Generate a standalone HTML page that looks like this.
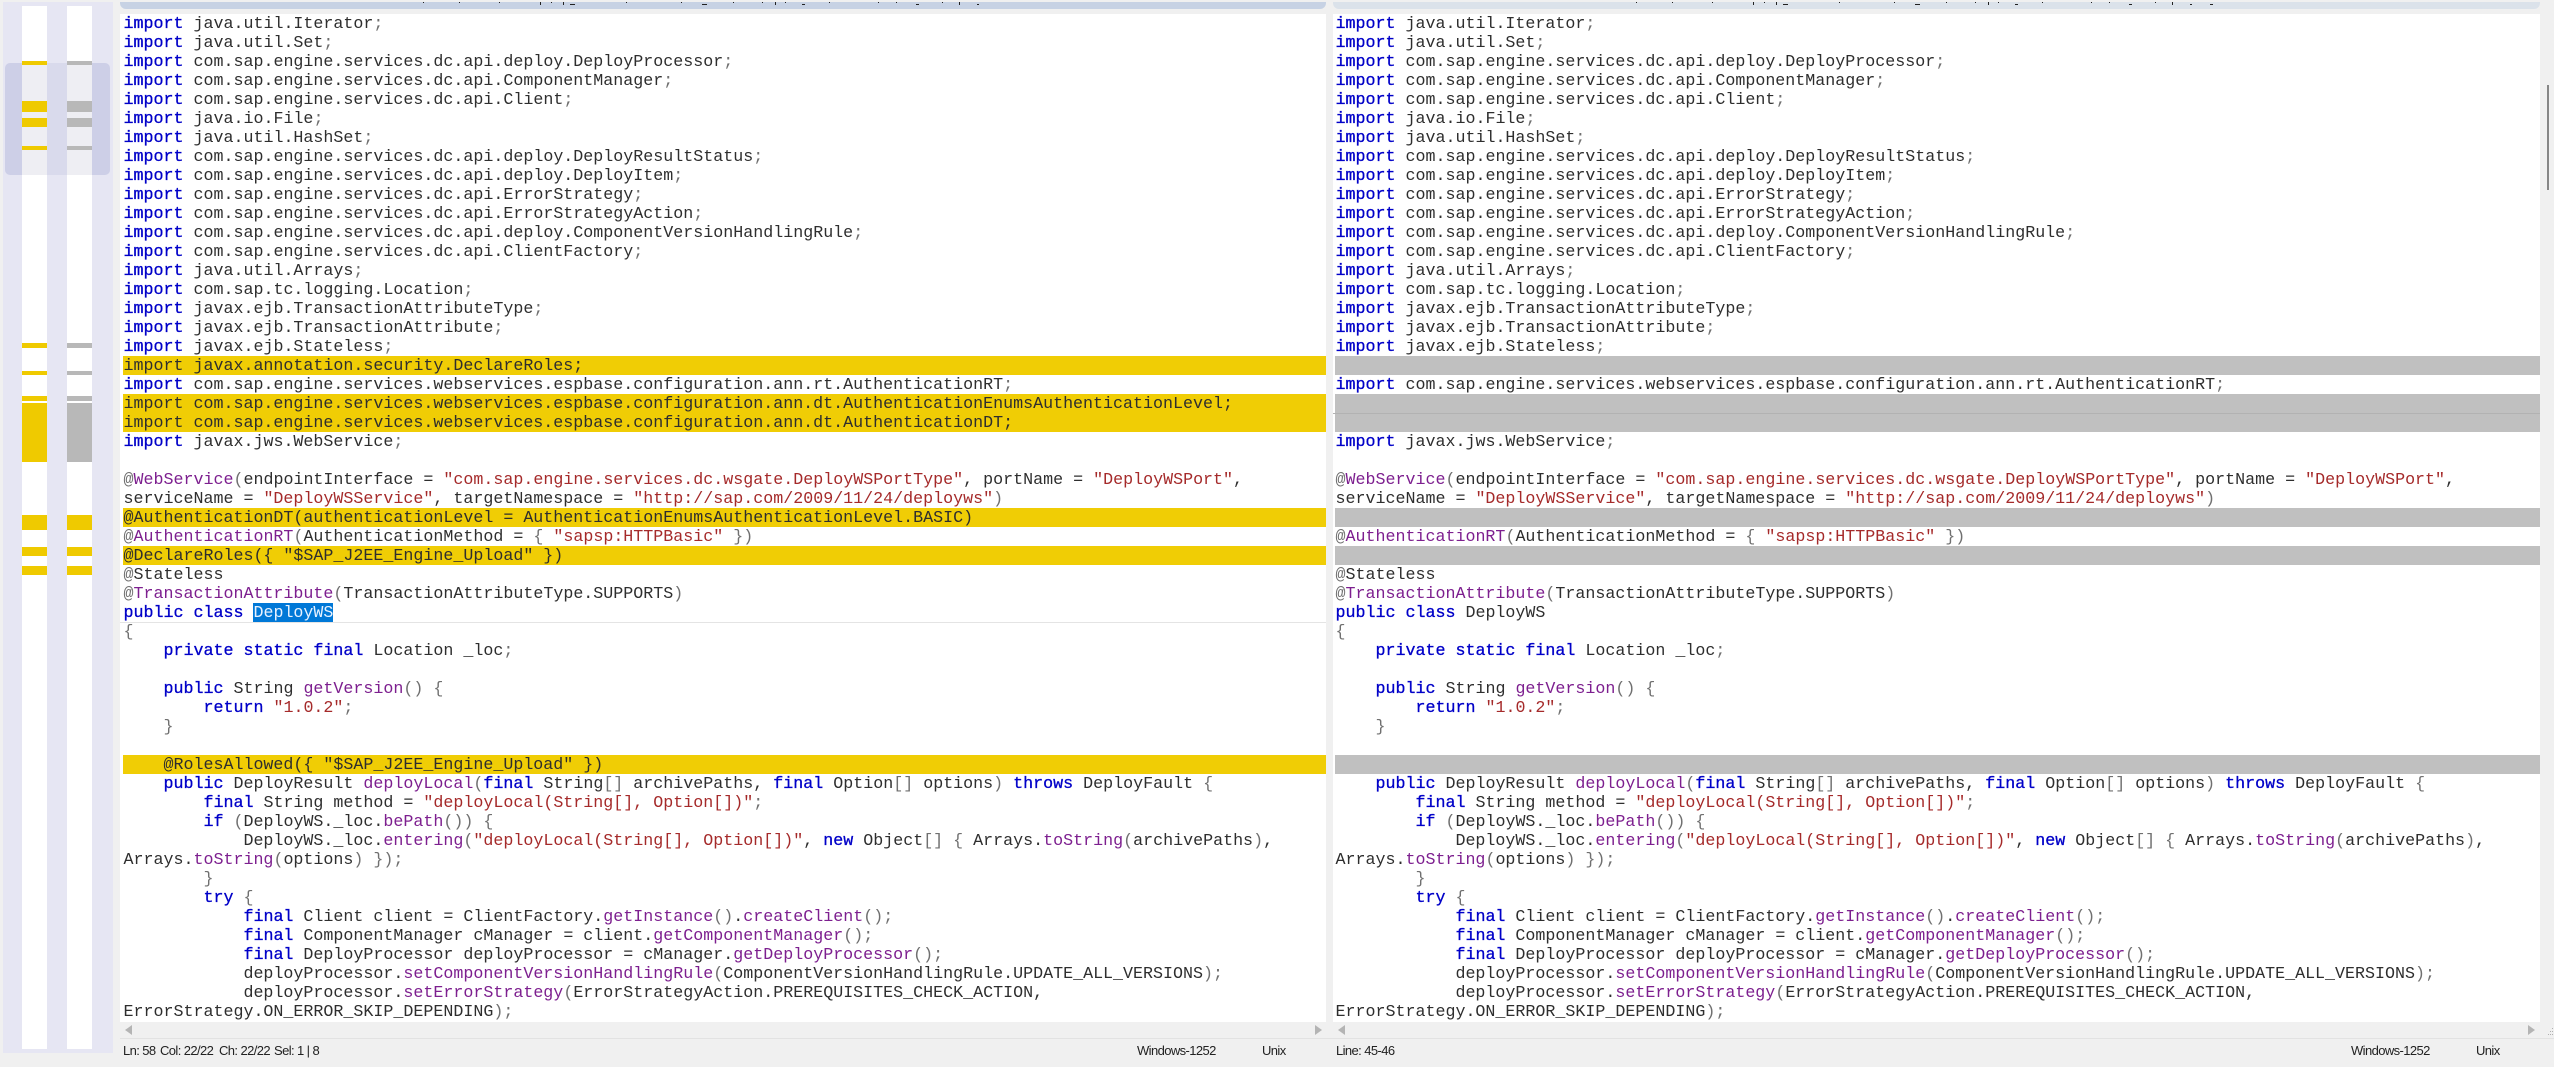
<!DOCTYPE html>
<html>
<head>
<meta charset="utf-8">
<style>
html,body{margin:0;padding:0;width:2554px;height:1067px;overflow:hidden;background:#f0f0f0}
.r{position:absolute}
pre{position:absolute;margin:0;top:15px;font:16.667px/19px "Liberation Mono",monospace;color:#2e2e2e;white-space:pre}
pre b{font-weight:normal;color:#0000c8;-webkit-text-stroke:.3px #0000c8}
pre i{font-style:normal;color:#7d1f8f}
pre u{text-decoration:none;color:#a52a2a}
pre s{text-decoration:none;color:#707070}
.hl{position:absolute;height:19px;background:#f0cd05}
.gr{position:absolute;height:19px;background:#c0c0c0}
.st{position:absolute;top:1043px;font:13px/16px "Liberation Sans",sans-serif;letter-spacing:-.6px;color:#222;white-space:pre}
.y{position:absolute;background:#efca00}
.g{position:absolute;background:#b8b8b8}
</style>
</head>
<body>
<!-- overview sidebar -->
<div class="r" style="left:3px;top:2px;width:110px;height:1051px;background:#e6e6f3"></div>
<div class="r" style="left:5px;top:63px;width:105px;height:112px;background:#cdcfe7;border-radius:5px"></div>
<div class="r" style="left:47px;top:63px;width:20px;height:112px;background:#d9daec"></div>
<div class="r" style="left:22px;top:6px;width:25px;height:1043px;background:#fff"></div>
<div class="r" style="left:67px;top:6px;width:25px;height:1043px;background:#fff"></div>
<div class="r" style="left:22px;top:63px;width:25px;height:112px;background:#eeeef3"></div>
<div class="r" style="left:67px;top:63px;width:25px;height:112px;background:#eeeef3"></div>
<div class="y" style="left:22px;top:61px;width:25px;height:4px"></div>
<div class="y" style="left:22px;top:101px;width:25px;height:11px"></div>
<div class="y" style="left:22px;top:118px;width:25px;height:9px"></div>
<div class="y" style="left:22px;top:146px;width:25px;height:4px"></div>
<div class="y" style="left:22px;top:343px;width:25px;height:5px"></div>
<div class="y" style="left:22px;top:371px;width:25px;height:4px"></div>
<div class="y" style="left:22px;top:396px;width:25px;height:5px"></div>
<div class="y" style="left:22px;top:403px;width:25px;height:59px"></div>
<div class="y" style="left:22px;top:515px;width:25px;height:15px"></div>
<div class="y" style="left:22px;top:547px;width:25px;height:9px"></div>
<div class="y" style="left:22px;top:566px;width:25px;height:9px"></div>
<div class="g" style="left:67px;top:61px;width:25px;height:4px"></div>
<div class="g" style="left:67px;top:101px;width:25px;height:11px"></div>
<div class="g" style="left:67px;top:118px;width:25px;height:9px"></div>
<div class="g" style="left:67px;top:146px;width:25px;height:4px"></div>
<div class="g" style="left:67px;top:343px;width:25px;height:5px"></div>
<div class="g" style="left:67px;top:371px;width:25px;height:4px"></div>
<div class="g" style="left:67px;top:396px;width:25px;height:5px"></div>
<div class="g" style="left:67px;top:403px;width:25px;height:59px"></div>
<div class="y" style="left:67px;top:515px;width:25px;height:15px"></div>
<div class="y" style="left:67px;top:547px;width:25px;height:9px"></div>
<div class="y" style="left:67px;top:566px;width:25px;height:9px"></div>

<!-- top bands -->
<div class="r" style="left:120px;top:2px;width:1206px;height:7px;background:#c7d2e4;border-radius:0 0 6px 6px"></div>
<div class="r" style="left:1333px;top:2px;width:1207px;height:7px;background:#dbe2ea;border-radius:0 0 6px 6px"></div>
<svg class="r" style="left:0;top:2px" width="2554" height="4">
<path d="M423 0h1v1h-1zM459 0h1v1h-1zM499 0h1v1h-1zM540 0h1v3h-1zM551 0h1v1h-1zM563 0h1v3h-1zM570 2h5v1h-5zM626 0h1v1h-1zM681 0h1v1h-1zM702 2h5v1h-5zM733 0h1v1h-1zM762 0h1v1h-1zM775 0h1v3h-1zM785 0h1v1h-1zM802 2h3v1h-3zM829 0h1v1h-1zM878 0h1v1h-1zM896 0h1v1h-1zM916 2h3v1h-3zM942 0h1v1h-1zM959 0h1v3h-1zM977 2h2v1h-2z" fill="#222"/>
<path d="M1636 0h1v1h-1zM1672 0h1v1h-1zM1712 0h1v1h-1zM1753 0h1v3h-1zM1764 0h1v1h-1zM1776 0h1v3h-1zM1783 2h5v1h-5zM1839 0h1v1h-1zM1894 0h1v1h-1zM1915 2h5v1h-5zM1946 0h1v1h-1zM1975 0h1v1h-1zM1988 0h1v3h-1zM1998 0h1v1h-1zM2015 2h3v1h-3zM2042 0h1v1h-1zM2091 0h1v1h-1zM2109 0h1v1h-1zM2129 2h3v1h-3zM2155 0h1v1h-1zM2172 0h1v3h-1zM2190 2h2v1h-2zM2210 2h3v1h-3z" fill="#222"/>
</svg>

<!-- panes -->
<div class="r" style="left:120px;top:14px;width:1206px;height:1008px;background:#fff"></div>
<div class="r" style="left:1333px;top:14px;width:1207px;height:1008px;background:#fff"></div>

<!-- left highlights -->
<div class="hl" style="left:123px;top:356px;width:1203px"></div>
<div class="hl" style="left:123px;top:394px;width:1203px;height:38px"></div>
<div class="hl" style="left:123px;top:508px;width:1203px"></div>
<div class="hl" style="left:123px;top:546px;width:1203px"></div>
<div class="hl" style="left:123px;top:755px;width:1203px"></div>
<div class="r" style="left:120px;top:622px;width:1206px;height:1px;background:#e4e4e4"></div>
<div class="r" style="left:253px;top:603px;width:80px;height:19px;background:#0078d7"></div>

<!-- right highlights -->
<div class="gr" style="left:1335px;top:356px;width:1205px"></div>
<div class="gr" style="left:1335px;top:394px;width:1205px;height:38px"></div>
<div class="gr" style="left:1335px;top:508px;width:1205px"></div>
<div class="gr" style="left:1335px;top:546px;width:1205px"></div>
<div class="gr" style="left:1335px;top:755px;width:1205px"></div>
<div class="r" style="left:1333px;top:413px;width:1207px;height:1px;background:#b2b2b2"></div>

<pre style="left:123.5px"><b>import</b> java.util.Iterator<s>;</s>
<b>import</b> java.util.Set<s>;</s>
<b>import</b> com.sap.engine.services.dc.api.deploy.DeployProcessor<s>;</s>
<b>import</b> com.sap.engine.services.dc.api.ComponentManager<s>;</s>
<b>import</b> com.sap.engine.services.dc.api.Client<s>;</s>
<b>import</b> java.io.File<s>;</s>
<b>import</b> java.util.HashSet<s>;</s>
<b>import</b> com.sap.engine.services.dc.api.deploy.DeployResultStatus<s>;</s>
<b>import</b> com.sap.engine.services.dc.api.deploy.DeployItem<s>;</s>
<b>import</b> com.sap.engine.services.dc.api.ErrorStrategy<s>;</s>
<b>import</b> com.sap.engine.services.dc.api.ErrorStrategyAction<s>;</s>
<b>import</b> com.sap.engine.services.dc.api.deploy.ComponentVersionHandlingRule<s>;</s>
<b>import</b> com.sap.engine.services.dc.api.ClientFactory<s>;</s>
<b>import</b> java.util.Arrays<s>;</s>
<b>import</b> com.sap.tc.logging.Location<s>;</s>
<b>import</b> javax.ejb.TransactionAttributeType<s>;</s>
<b>import</b> javax.ejb.TransactionAttribute<s>;</s>
<b>import</b> javax.ejb.Stateless<s>;</s>
import javax.annotation.security.DeclareRoles;
<b>import</b> com.sap.engine.services.webservices.espbase.configuration.ann.rt.AuthenticationRT<s>;</s>
import com.sap.engine.services.webservices.espbase.configuration.ann.dt.AuthenticationEnumsAuthenticationLevel;
import com.sap.engine.services.webservices.espbase.configuration.ann.dt.AuthenticationDT;
<b>import</b> javax.jws.WebService<s>;</s>

<s>@</s><i>WebService</i><s>(</s>endpointInterface = <u>"com.sap.engine.services.dc.wsgate.DeployWSPortType"</u>, portName = <u>"DeployWSPort"</u>,
serviceName = <u>"DeployWSService"</u>, targetNamespace = <u>"http://sap.com/2009/11/24/deployws"</u><s>)</s>
@AuthenticationDT(authenticationLevel = AuthenticationEnumsAuthenticationLevel.BASIC)
<s>@</s><i>AuthenticationRT</i><s>(</s>AuthenticationMethod = <s>{</s> <u>"sapsp:HTTPBasic"</u> <s>})</s>
@DeclareRoles({ "$SAP_J2EE_Engine_Upload" })
<s>@</s>Stateless
<s>@</s><i>TransactionAttribute</i><s>(</s>TransactionAttributeType.SUPPORTS<s>)</s>
<b>public class</b> <span style="color:#e8f2ff">DeployWS</span>
<s>{</s>
    <b>private static final</b> Location _loc<s>;</s>

    <b>public</b> String <i>getVersion</i><s>() {</s>
        <b>return</b> <u>"1.0.2"</u><s>;</s>
    <s>}</s>

    @RolesAllowed({ "$SAP_J2EE_Engine_Upload" })
    <b>public</b> DeployResult <i>deployLocal</i><s>(</s><b>final</b> String<s>[]</s> archivePaths, <b>final</b> Option<s>[]</s> options<s>)</s> <b>throws</b> DeployFault <s>{</s>
        <b>final</b> String method = <u>"deployLocal(String[], Option[])"</u><s>;</s>
        <b>if</b> <s>(</s>DeployWS._loc.<i>bePath</i><s>()) {</s>
            DeployWS._loc.<i>entering</i><s>(</s><u>"deployLocal(String[], Option[])"</u>, <b>new</b> Object<s>[] {</s> Arrays.<i>toString</i><s>(</s>archivePaths<s>)</s>,
Arrays.<i>toString</i><s>(</s>options<s>) });</s>
        <s>}</s>
        <b>try</b> <s>{</s>
            <b>final</b> Client client = ClientFactory.<i>getInstance</i><s>()</s>.<i>createClient</i><s>();</s>
            <b>final</b> ComponentManager cManager = client.<i>getComponentManager</i><s>();</s>
            <b>final</b> DeployProcessor deployProcessor = cManager.<i>getDeployProcessor</i><s>();</s>
            deployProcessor.<i>setComponentVersionHandlingRule</i><s>(</s>ComponentVersionHandlingRule.UPDATE_ALL_VERSIONS<s>);</s>
            deployProcessor.<i>setErrorStrategy</i><s>(</s>ErrorStrategyAction.PREREQUISITES_CHECK_ACTION,
ErrorStrategy.ON_ERROR_SKIP_DEPENDING<s>);</s></pre>

<pre style="left:1335.5px"><b>import</b> java.util.Iterator<s>;</s>
<b>import</b> java.util.Set<s>;</s>
<b>import</b> com.sap.engine.services.dc.api.deploy.DeployProcessor<s>;</s>
<b>import</b> com.sap.engine.services.dc.api.ComponentManager<s>;</s>
<b>import</b> com.sap.engine.services.dc.api.Client<s>;</s>
<b>import</b> java.io.File<s>;</s>
<b>import</b> java.util.HashSet<s>;</s>
<b>import</b> com.sap.engine.services.dc.api.deploy.DeployResultStatus<s>;</s>
<b>import</b> com.sap.engine.services.dc.api.deploy.DeployItem<s>;</s>
<b>import</b> com.sap.engine.services.dc.api.ErrorStrategy<s>;</s>
<b>import</b> com.sap.engine.services.dc.api.ErrorStrategyAction<s>;</s>
<b>import</b> com.sap.engine.services.dc.api.deploy.ComponentVersionHandlingRule<s>;</s>
<b>import</b> com.sap.engine.services.dc.api.ClientFactory<s>;</s>
<b>import</b> java.util.Arrays<s>;</s>
<b>import</b> com.sap.tc.logging.Location<s>;</s>
<b>import</b> javax.ejb.TransactionAttributeType<s>;</s>
<b>import</b> javax.ejb.TransactionAttribute<s>;</s>
<b>import</b> javax.ejb.Stateless<s>;</s>

<b>import</b> com.sap.engine.services.webservices.espbase.configuration.ann.rt.AuthenticationRT<s>;</s>


<b>import</b> javax.jws.WebService<s>;</s>

<s>@</s><i>WebService</i><s>(</s>endpointInterface = <u>"com.sap.engine.services.dc.wsgate.DeployWSPortType"</u>, portName = <u>"DeployWSPort"</u>,
serviceName = <u>"DeployWSService"</u>, targetNamespace = <u>"http://sap.com/2009/11/24/deployws"</u><s>)</s>

<s>@</s><i>AuthenticationRT</i><s>(</s>AuthenticationMethod = <s>{</s> <u>"sapsp:HTTPBasic"</u> <s>})</s>

<s>@</s>Stateless
<s>@</s><i>TransactionAttribute</i><s>(</s>TransactionAttributeType.SUPPORTS<s>)</s>
<b>public class</b> DeployWS
<s>{</s>
    <b>private static final</b> Location _loc<s>;</s>

    <b>public</b> String <i>getVersion</i><s>() {</s>
        <b>return</b> <u>"1.0.2"</u><s>;</s>
    <s>}</s>


    <b>public</b> DeployResult <i>deployLocal</i><s>(</s><b>final</b> String<s>[]</s> archivePaths, <b>final</b> Option<s>[]</s> options<s>)</s> <b>throws</b> DeployFault <s>{</s>
        <b>final</b> String method = <u>"deployLocal(String[], Option[])"</u><s>;</s>
        <b>if</b> <s>(</s>DeployWS._loc.<i>bePath</i><s>()) {</s>
            DeployWS._loc.<i>entering</i><s>(</s><u>"deployLocal(String[], Option[])"</u>, <b>new</b> Object<s>[] {</s> Arrays.<i>toString</i><s>(</s>archivePaths<s>)</s>,
Arrays.<i>toString</i><s>(</s>options<s>) });</s>
        <s>}</s>
        <b>try</b> <s>{</s>
            <b>final</b> Client client = ClientFactory.<i>getInstance</i><s>()</s>.<i>createClient</i><s>();</s>
            <b>final</b> ComponentManager cManager = client.<i>getComponentManager</i><s>();</s>
            <b>final</b> DeployProcessor deployProcessor = cManager.<i>getDeployProcessor</i><s>();</s>
            deployProcessor.<i>setComponentVersionHandlingRule</i><s>(</s>ComponentVersionHandlingRule.UPDATE_ALL_VERSIONS<s>);</s>
            deployProcessor.<i>setErrorStrategy</i><s>(</s>ErrorStrategyAction.PREREQUISITES_CHECK_ACTION,
ErrorStrategy.ON_ERROR_SKIP_DEPENDING<s>);</s></pre>

<!-- scroll bars -->
<div class="r" style="left:2547px;top:85px;width:2px;height:105px;background:#868686"></div>
<svg class="r" style="left:0;top:1022px" width="2554" height="16">
<path d="M132 3v10l-7-5z" fill="#b4b4b4"/>
<path d="M1315 3v10l7-5z" fill="#b4b4b4"/>
<path d="M1345 3v10l-7-5z" fill="#b4b4b4"/>
<path d="M2528 3v10l7-5z" fill="#b4b4b4"/>
<path d="M2552 6h1v1h-1zM2550 9h1v1h-1zM2552 9h1v1h-1zM2548 12h1v1h-1zM2550 12h1v1h-1zM2552 12h1v1h-1z" fill="#b0b0b0"/>
</svg>
<div class="r" style="left:120px;top:1038px;width:2434px;height:1px;background:#e2e2e2"></div>

<!-- status -->
<div class="st" style="left:123px">Ln: 58</div>
<div class="st" style="left:160px">Col: 22/22</div>
<div class="st" style="left:219px">Ch: 22/22</div>
<div class="st" style="left:274px">Sel: 1 | 8</div>
<div class="st" style="left:1137px">Windows-1252</div>
<div class="st" style="left:1262px">Unix</div>
<div class="st" style="left:1336px">Line: 45-46</div>
<div class="st" style="left:2351px">Windows-1252</div>
<div class="st" style="left:2476px">Unix</div>
</body>
</html>
